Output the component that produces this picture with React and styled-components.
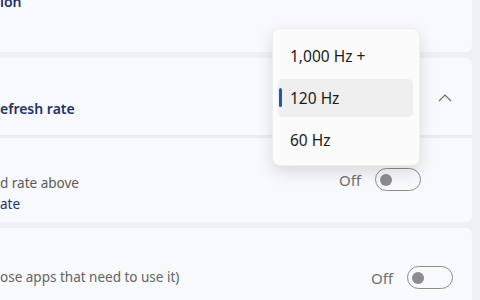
import React from 'react';
import styled, { createGlobalStyle } from 'styled-components';

const GlobalStyle = createGlobalStyle`
    body {
        margin: 0;
        background: #edf0f5;
        font-family: "Noto Sans", "Open Sans", sans-serif;
        overflow: hidden;
    }
`;

const Page = styled.div`
    position: relative;
    width: 480px;
    height: 300px;
    overflow: hidden;
`;

const Column = styled.div`
    display: flex;
    flex-direction: column;
    gap: 6px;
    margin: -20px 8px 0 -16px;
`;

const Card = styled.div`
    background: #f8f9fc;
    border-radius: 6px;
    height: ${(p) => p.height}px;
    box-sizing: border-box;
`;

const TopCard = styled(Card)`
    padding: 12px 16px 0;
`;

const Expander = styled.div`
    display: flex;
    flex-direction: column;
    background: #f8f9fc;
    border-radius: 6px;
`;

const Header = styled.div`
    display: flex;
    align-items: center;
    justify-content: space-between;
    height: 77px;
    padding: 0 20px 0 16px;
    box-sizing: border-box;
`;

const HeaderLabel = styled.div`
    align-self: flex-end;
    padding-bottom: 16px;
`;

const Strong = styled.div`
    font-size: 14px;
    line-height: 20px;
    font-weight: 600;
    color: #1d3466;
`;

const Content = styled.div`
    display: flex;
    justify-content: space-between;
    align-items: flex-start;
    height: 87px;
    border-top: 3px solid #e9ecf2;
    padding: 30px 51px 0 16px;
    box-sizing: border-box;
`;

const TextBlock = styled.div`
    margin-top: 5px;
`;

const Desc = styled.div`
    color: ${(p) => p.color || '#5a5a5a'};
    font-size: 13.5px;
    line-height: 21px;
`;

const Link = styled(Desc)`
    color: #1d3466;
`;

const BottomCard = styled(Card)`
    display: flex;
    align-items: center;
    justify-content: space-between;
    padding: 0 19px 0 16px;
    height: 97px;
`;

const BottomRow = styled.div`
    display: flex;
    align-items: center;
    justify-content: space-between;
    width: 100%;
    margin-top: 2px;
    height: 23px;
`;

const ToggleGroup = styled.div`
    display: flex;
    align-items: center;
    gap: 14px;
`;

const OffLabel = styled.span`
    font-size: 15px;
    color: #707070;
`;

const Toggle = styled.div`
    width: 46px;
    height: 23px;
    box-sizing: border-box;
    border: 1px solid #8d8d8d;
    border-radius: 12px;
    display: flex;
    align-items: center;
    padding-left: 4px;
    &::after {
        content: '';
        width: 12px;
        height: 12px;
        border-radius: 50%;
        background: #8d8d8d;
    }
`;

const Flyout = styled.div`
    position: absolute;
    left: 272px;
    top: 28px;
    width: 148px;
    height: 138px;
    box-sizing: border-box;
    padding: 8px 6px 6px 5px;
    display: flex;
    flex-direction: column;
    gap: 5px;
    background: #fbfbfb;
    border: 1px solid rgba(0, 0, 0, 0.05);
    border-radius: 8px;
    box-shadow: 0 6px 16px rgba(0, 0, 0, 0.13);
`;

const Option = styled.div`
    position: relative;
    height: 38px;
    display: flex;
    align-items: center;
    padding-left: 12px;
    border-radius: 5px;
    font-size: 15.5px;
    color: #1b1b1b;
    background: ${(p) => (p.selected ? '#efefef' : 'transparent')};
    ${(p) => p.selected && `
        &::before {
            content: '';
            position: absolute;
            left: 1px;
            top: 9px;
            width: 3px;
            height: 19px;
            border-radius: 2px;
            background: #1d5ba8;
        }
    `}
`;

const Chevron = () => (
    <svg width="14" height="8" viewBox="0 0 14 8" style={{ marginTop: 3 }}>
        <path d="M1 7 L7 1 L13 7" fill="none" stroke="#666" strokeWidth="1.1" />
    </svg>
);

const options = [
    { label: '1,000 Hz +' },
    { label: '120 Hz', selected: true },
    { label: '60 Hz' },
];

const App = () => {
  return (
    <Page>
        <GlobalStyle />
        <Column>
            <TopCard height={72}>
                <Strong>ion</Strong>
            </TopCard>

            <Expander>
                <Header>
                    <HeaderLabel>
                        <Strong>efresh rate</Strong>
                    </HeaderLabel>
                    <Chevron />
                </Header>
                <Content>
                    <TextBlock>
                        <Desc>d rate above</Desc>
                        <Link>ate</Link>
                    </TextBlock>
                    <ToggleGroup>
                        <OffLabel>Off</OffLabel>
                        <Toggle />
                    </ToggleGroup>
                </Content>
            </Expander>

            <BottomCard>
                <BottomRow>
                    <Desc color="#646464">ose apps that need to use it)</Desc>
                    <ToggleGroup>
                        <OffLabel>Off</OffLabel>
                        <Toggle />
                    </ToggleGroup>
                </BottomRow>
            </BottomCard>
        </Column>

        <Flyout>
            {options.map((o) => (
                <Option key={o.label} selected={o.selected}>{o.label}</Option>
            ))}
        </Flyout>
    </Page>
  )
}

export default App;
